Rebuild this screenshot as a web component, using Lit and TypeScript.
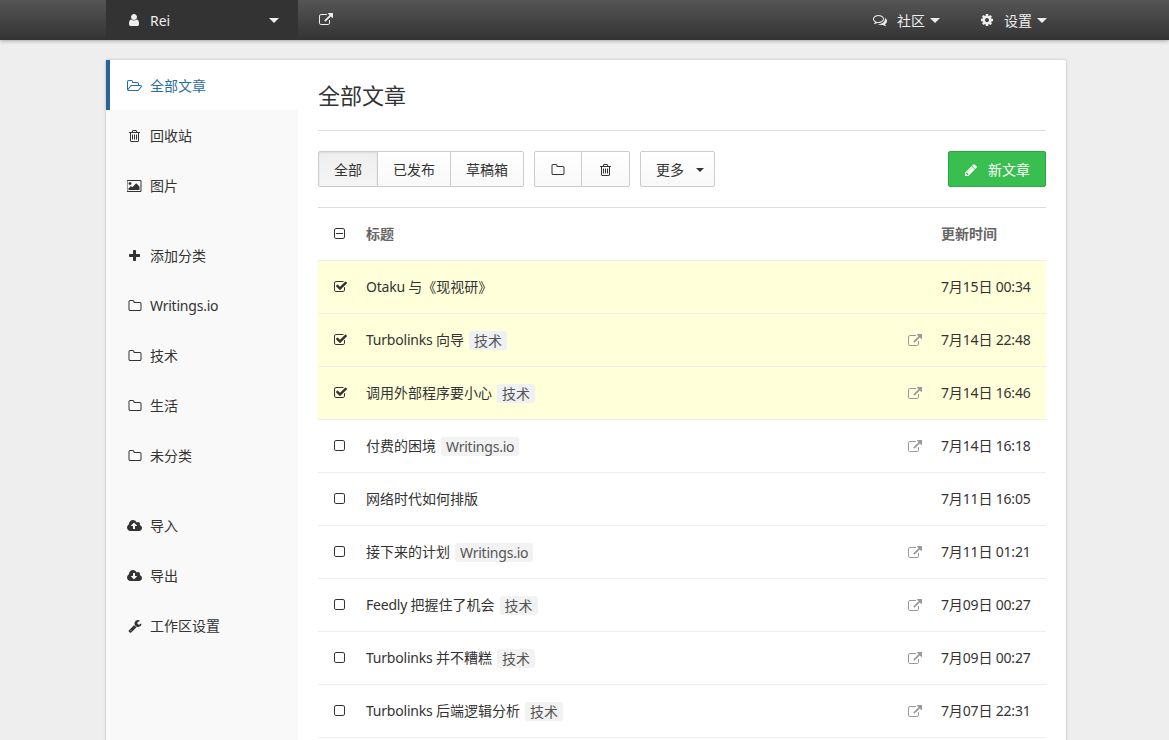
import { LitElement, html, css, svg } from "lit"
import { customElement } from "lit/decorators.js"

// Font Awesome 4 style glyphs, [viewBox width, path]
const ICONS: Record<string, [number, string]> = {
  user: [1792, "M1536 1399q0 109-62.5 187t-150.5 78h-854q-88 0-150.5-78t-62.5-187q0-85 8.5-160.5t31.5-152 58.5-131 94-89 134.5-34.5q131 128 313 128t313-128q76 0 134.5 34.5t94 89 58.5 131 31.5 152 8.5 160.5zm-256-887q0 159-112.5 271.5t-271.5 112.5-271.5-112.5-112.5-271.5 112.5-271.5 271.5-112.5 271.5 112.5 112.5 271.5z"],
  link: [1792, "M1408 928v320q0 119-84.5 203.5t-203.5 84.5h-832q-119 0-203.5-84.5t-84.5-203.5v-832q0-119 84.5-203.5t203.5-84.5h704q14 0 23 9t9 23v64q0 14-9 23t-23 9h-704q-66 0-113 47t-47 113v832q0 66 47 113t113 47h832q66 0 113-47t47-113v-320q0-14 9-23t23-9h64q14 0 23 9t9 23zm384-864v512q0 26-19 45t-45 19-45-19l-176-176-652 652q-10 10-23 10t-23-10l-114-114q-10-10-10-23t10-23l652-652-176-176q-19-19-19-45t19-45 45-19h512q26 0 45 19t19 45z"],
  folder: [1792, "M1600 1312v-704q0-40-28-68t-68-28h-704q-40 0-68-28t-28-68v-64q0-40-28-68t-68-28h-320q-40 0-68 28t-28 68v960q0 40 28 68t68 28h1216q40 0 68-28t28-68zm128-704v704q0 92-66 158t-158 66h-1216q-92 0-158-66t-66-158v-960q0-92 66-158t158-66h320q92 0 158 66t66 158v32h672q92 0 158 66t66 158z"],
  folderOpen: [1920, "M1781 931q0-35-53-35h-1088q-40 0-85.5 21.5t-71.5 52.5l-294 363q-18 24-18 40 0 35 53 35h1088q40 0 86-22t71-53l294-363q18-22 18-39zm-1141-163h768v-160q0-40-28-68t-68-28h-576q-40 0-68-28t-28-68v-64q0-40-28-68t-68-28h-320q-40 0-68 28t-28 68v853l256-315q44-53 116-87.5t140-34.5zm1269 163q0 62-46 120l-295 363q-43 53-116 87.5t-140 34.5h-1088q-92 0-158-66t-66-158v-960q0-92 66-158t158-66h320q92 0 158 66t66 158v32h544q92 0 158 66t66 158v160h192q54 0 99 24.5t67 70.5q15 32 15 68z"],
  trash: [1408, "M512 736v576q0 14-9 23t-23 9h-64q-14 0-23-9t-9-23v-576q0-14 9-23t23-9h64q14 0 23 9t9 23zm256 0v576q0 14-9 23t-23 9h-64q-14 0-23-9t-9-23v-576q0-14 9-23t23-9h64q14 0 23 9t9 23zm256 0v576q0 14-9 23t-23 9h-64q-14 0-23-9t-9-23v-576q0-14 9-23t23-9h64q14 0 23 9t9 23zm128 724v-948h-896v948q0 22 7 40.5t14.5 27 10.5 8.5h832q3 0 10.5-8.5t14.5-27 7-40.5zm-672-1076h448l-48-117q-7-9-17-11h-317q-10 2-17 11zm928 32v64q0 14-9 23t-23 9h-96v948q0 83-47 143.5t-113 60.5h-832q-66 0-113-58.5t-47-141.5v-952h-96q-14 0-23-9t-9-23v-64q0-14 9-23t23-9h309l70-167q15-37 54-63t79-26h320q40 0 79 26t54 63l70 167h309q14 0 23 9t9 23z"],
  picture: [1920, "M576 576q0 80-56 136t-136 56-136-56-56-136 56-136 136-56 136 56 56 136zm1024 384v448h-1408v-192l320-320 160 160 512-512zm96-704h-1600q-13 0-22.5 9.5t-9.5 22.5v1216q0 13 9.5 22.5t22.5 9.5h1600q13 0 22.5-9.5t9.5-22.5v-1216q0-13-9.5-22.5t-22.5-9.5zm160 32v1216q0 66-47 113t-113 47h-1600q-66 0-113-47t-47-113v-1216q0-66 47-113t113-47h1600q66 0 113 47t47 113z"],
  plus: [1408, "M1408 736v192q0 40-28 68t-68 28h-416v416q0 40-28 68t-68 28h-192q-40 0-68-28t-28-68v-416h-416q-40 0-68-28t-28-68v-192q0-40 28-68t68-28h416v-416q0-40 28-68t68-28h192q40 0 68 28t28 68v416h416q40 0 68 28t28 68z"],
  upload: [1920, "M1280 864q0-14-9-23l-352-352q-9-9-23-9t-23 9l-351 351q-10 12-10 24 0 14 9 23t23 9h224v352q0 13 9.5 22.5t22.5 9.5h192q13 0 22.5-9.5t9.5-22.5v-352h224q13 0 22.5-9.5t9.5-22.5zm640 288q0 159-112.5 271.5t-271.5 112.5h-1088q-185 0-316.5-131.5t-131.5-316.5q0-130 70-240t188-165q-2-30-2-43 0-212 150-362t362-150q156 0 285.5 87t188.5 231q71-62 166-62 106 0 181 75t75 181q0 76-41 138 130 31 213.5 135.5t83.5 238.5z"],
  download: [1920, "M1280 928q0-14-9-23t-23-9h-224v-352q0-13-9.5-22.5t-22.5-9.5h-192q-13 0-22.5 9.5t-9.5 22.5v352h-224q-13 0-22.5 9.5t-9.5 22.5q0 14 9 23l352 352q9 9 23 9t23-9l351-351q10-12 10-24zm640 224q0 159-112.5 271.5t-271.5 112.5h-1088q-185 0-316.5-131.5t-131.5-316.5q0-130 70-240t188-165q-2-30-2-43 0-212 150-362t362-150q156 0 285.5 87t188.5 231q71-62 166-62 106 0 181 75t75 181q0 76-41 138 130 31 213.5 135.5t83.5 238.5z"],
  wrench: [1792, "M448 1472q0-26-19-45t-45-19-45 19-19 45 19 45 45 19 45-19 19-45zm644-420l-682 682q-37 37-90 37-52 0-91-37l-106-108q-38-36-38-90 0-53 38-91l681-681q39 98 114.5 173.5t173.5 114.5zm634-435q0 39-23 106-47 134-164.5 217.5t-258.5 83.5q-185 0-316.5-131.5t-131.5-316.5 131.5-316.5 316.5-131.5q58 0 121.5 16.5t107.5 46.5q16 11 16 28t-16 28l-293 169v224l193 107q5-3 79-48.5t135.5-81 70.5-35.5q15 0 23.5 10t8.5 25z"],
  comments: [1792, "M704 384q-153 0-286 52t-211.5 141-78.5 191q0 82 53 158t149 132l97 56-35 84q34-20 62-39l44-31 53 10q78 14 153 14 153 0 286-52t211.5-141 78.5-191-78.5-191-211.5-141-286-52zm0-128q191 0 353.5 68.5t256.5 186.5 94 257-94 257-256.5 186.5-353.5 68.5q-86 0-176-16-124 88-278 128-36 9-86 16h-3q-11 0-20.5-8t-11.5-21q-1-3-1-6.5t.5-6.5 2-6l2.5-5 3.5-5.5 4-5 4.5-5 4-4.5q5-6 23-25t26-29.5 22.5-29 25-38.5 20.5-44q-124-72-195-177t-71-224q0-139 94-257t256.5-186.5 353.5-68.5zm822 1169q10 24 20.5 44t25 38.5 22.5 29 26 29.5 23 25q1 1 4 4.5t4.5 5 4 5 3.5 5.5l2.5 5 2 6 .5 6.5-1 6.5q-3 14-13 22t-22 7q-50-7-86-16-154-40-278-128-90 16-176 16-271 0-472-132 58 4 88 4 161 0 309-45t264-129q125-92 192-212t67-254q0-77-23-152 129 71 204 178t75 230q0 120-71 224.5t-195 176.5z"],
  cog: [1792, "M1152 896q0-106-75-181t-181-75-181 75-75 181 75 181 181 75 181-75 75-181zm512-109v222q0 12-8 23t-20 13l-185 28q-19 54-39 91 35 50 107 138 10 12 10 25t-9 23q-27 37-99 108t-94 71q-12 0-26-9l-138-108q-44 23-91 38-16 136-29 186-7 28-36 28h-222q-14 0-24.5-8.5t-11.5-21.5l-28-184q-49-16-90-37l-141 107q-10 9-25 9-14 0-25-11-126-114-165-168-7-10-7-23 0-12 8-23 15-21 51-66.5t54-70.5q-27-50-41-99l-183-27q-13-2-21-12.5t-8-23.5v-222q0-12 8-23t19-13l186-28q14-46 39-92-40-57-107-138-10-12-10-24 0-10 9-23 26-36 98.5-107.5t94.5-71.5q13 0 26 10l138 107q44-23 91-38 16-136 29-186 7-28 36-28h222q14 0 24.5 8.5t11.5 21.5l28 184q49 16 90 37l142-107q9-9 24-9 13 0 25 10 129 119 165 170 7 8 7 22 0 12-8 23-15 21-51 66.5t-54 70.5q26 50 41 98l183 28q13 2 21 12.5t8 23.5z"],
  pencil: [1536, "M363 1536l91-91-235-235-91 91v107h128v128h107zm523-928q0-22-22-22-10 0-17 7l-542 542q-7 7-7 17 0 22 22 22 10 0 17-7l542-542q7-7 7-17zm-54-192l416 416-832 832h-416v-416zm683 96q0 53-37 90l-166 166-416-416 166-165q36-38 90-38 53 0 91 38l235 234q37 39 37 91z"],
  checked: [1664, "M1408 930v318q0 119-84.5 203.5t-203.5 84.5h-832q-119 0-203.5-84.5t-84.5-203.5v-832q0-119 84.5-203.5t203.5-84.5h832q63 0 117 25 15 7 18 23 3 17-9 29l-49 49q-10 10-23 10-3 0-9-2-23-6-45-6h-832q-66 0-113 47t-47 113v832q0 66 47 113t113 47h832q66 0 113-47t47-113v-254q0-13 9-22l64-64q10-10 23-10 6 0 12 3 20 8 20 29zm231-489l-814 814q-24 24-57 24t-57-24l-430-430q-24-24-24-57t24-57l110-110q24-24 57-24t57 24l263 263 647-647q24-24 57-24t57 24l110 110q24 24 24 57t-24 57z"],
  unchecked: [1408, "M1120 256h-832q-66 0-113 47t-47 113v832q0 66 47 113t113 47h832q66 0 113-47t47-113v-832q0-66-47-113t-113-47zm288 160v832q0 119-84.5 203.5t-203.5 84.5h-832q-119 0-203.5-84.5t-84.5-203.5v-832q0-119 84.5-203.5t203.5-84.5h832q119 0 203.5 84.5t84.5 203.5z"],
  minus: [1408, "M1152 800v64q0 14-9 23t-23 9h-832q-14 0-23-9t-9-23v-64q0-14 9-23t23-9h832q14 0 23 9t9 23zM1120 256h-832q-66 0-113 47t-47 113v832q0 66 47 113t113 47h832q66 0 113-47t47-113v-832q0-66-47-113t-113-47zm288 160v832q0 119-84.5 203.5t-203.5 84.5h-832q-119 0-203.5-84.5t-84.5-203.5v-832q0-119 84.5-203.5t203.5-84.5h832q119 0 203.5 84.5t84.5 203.5z"],
}

function icon(name: string) {
  const [w, d] = ICONS[name]
  return html`<svg class="fa" viewBox="0 0 ${w} 1792" width=${(w / 1792) * 14} height="14" fill="currentColor">${svg`<path d=${d}></path>`}</svg>`
}

// latin runs get tightened so they take the same room as in the reference
function tx(s: string) {
  return s.split(/([\x20-\x7e]+)/).map((part, i) => (i % 2 ? html`<span class="lat">${part}</span>` : part))
}

interface Post {
  title: string
  tag?: string
  link?: boolean
  time: string
  checked?: boolean
}

const POSTS: Post[] = [
  { title: "Otaku 与《现视研》", time: "7月15日 00:34", checked: true },
  { title: "Turbolinks 向导", tag: "技术", link: true, time: "7月14日 22:48", checked: true },
  { title: "调用外部程序要小心", tag: "技术", link: true, time: "7月14日 16:46", checked: true },
  { title: "付费的困境", tag: "Writings.io", link: true, time: "7月14日 16:18" },
  { title: "网络时代如何排版", time: "7月11日 16:05" },
  { title: "接下来的计划", tag: "Writings.io", link: true, time: "7月11日 01:21" },
  { title: "Feedly 把握住了机会", tag: "技术", link: true, time: "7月09日 00:27" },
  { title: "Turbolinks 并不糟糕", tag: "技术", link: true, time: "7月09日 00:27" },
  { title: "Turbolinks 后端逻辑分析", tag: "技术", link: true, time: "7月07日 22:31" },
]

const SIDE_GROUPS: Array<Array<[string, string]>> = [
  [["folderOpen", "全部文章"], ["trash", "回收站"], ["picture", "图片"]],
  [["plus", "添加分类"], ["folder", "Writings.io"], ["folder", "技术"], ["folder", "生活"], ["folder", "未分类"]],
  [["upload", "导入"], ["download", "导出"], ["wrench", "工作区设置"]],
]

@customElement("app-root")
export class AppRoot extends LitElement {
  static styles = css`
    :host {
      display: block;
      height: 100vh;
      overflow: hidden;
      background: #eee;
      color: #333;
      font: 14px/20px "Noto Sans", "Noto Sans CJK SC", sans-serif;
    }
    * {
      box-sizing: border-box;
    }
    .fa {
      display: block;
      flex: none;
    }
    .lat {
      letter-spacing: -0.22px;
    }
    .navbar {
      height: 40px;
      background: linear-gradient(#555, #333);
      box-shadow: 0 1px 4px rgba(0, 0, 0, 0.3);
      color: #eee;
    }
    .nav-inner,
    .page {
      width: 960px;
      margin-left: 106px;
      display: flex;
    }
    .nav-inner {
      height: 40px;
      align-items: center;
    }
    .user {
      width: 192px;
      height: 40px;
      background: #333;
      display: flex;
      align-items: center;
      padding: 0 19px 0 21px;
    }
    .user .name {
      margin: 2px 0 0 9px;
      flex: 1;
    }
    .out {
      margin-left: 21px;
    }
    .spacer {
      flex: 1;
    }
    .menu {
      display: flex;
      align-items: center;
      margin-right: 19px;
    }
    .menu .fa {
      margin-right: 10px;
    }
    .menu .text {
      margin-top: 2px;
    }
    .menu.first {
      margin-right: 40px;
    }
    .caret {
      width: 0;
      height: 0;
      border: 5px solid transparent;
      border-top-color: currentColor;
      border-bottom: 0;
      margin-left: 5px;
    }
    .page {
      margin-top: 20px;
      height: 700px;
      background: #fff;
      box-shadow: 0 0 3px rgba(0, 0, 0, 0.25);
      border-radius: 2px 2px 0 0;
    }
    .side {
      width: 192px;
      background: #f9f9f9;
      flex: none;
    }
    .group + .group {
      margin-top: 20px;
    }
    .item {
      height: 50px;
      display: flex;
      align-items: center;
      padding: 2px 0 0 18px;
    }
    .item .ico {
      width: 21px;
      display: flex;
      justify-content: center;
    }
    .item .label {
      margin-left: 5px;
    }
    .item.active {
      background: #fff;
      border-left: 4px solid #2a6496;
      padding-left: 14px;
      color: #2a6ea6;
    }
    .main {
      flex: 1;
      padding: 0 20px;
    }
    h1 {
      margin: 0;
      height: 71px;
      border-bottom: 1px solid #ddd;
      font-size: 22px;
      font-weight: 400;
      line-height: 70px;
    }
    .toolbar {
      display: flex;
      align-items: center;
      height: 77px;
      border-bottom: 1px solid #ddd;
      padding-bottom: 1px;
    }
    .btn-group {
      display: flex;
      margin-right: 10px;
    }
    .btn {
      height: 36px;
      display: flex;
      align-items: center;
      justify-content: center;
      padding: 2px 15px 0;
      border: 1px solid #ccc;
      background: linear-gradient(#fff, #f8f8f8);
      margin-left: -1px;
    }
    .btn-group .btn:first-child {
      margin-left: 0;
      border-radius: 2px 0 0 2px;
    }
    .btn-group .btn:last-child {
      border-radius: 0 2px 2px 0;
    }
    .btn.on {
      background: linear-gradient(#eee, #f5f5f5);
      box-shadow: inset 0 1px 2px rgba(0, 0, 0, 0.08);
    }
    .btn.icon {
      width: 48px;
      padding: 2px 0 0;
    }
    .btn.icon.wide {
      width: 49px;
    }
    .btn .caret {
      margin-left: 12px;
      border-width: 4px 4px 0;
    }
    .btn.single {
      border-radius: 2px;
      margin-left: 0;
      padding-right: 10px;
    }
    .new {
      width: 98px;
      height: 36px;
      background: #39bf4f;
      border: 1px solid #2ca840;
      border-radius: 2px;
      color: #fff;
      display: flex;
      align-items: center;
      padding: 2px 0 0 16px;
    }
    .new .fa {
      margin-right: 11px;
    }
    .row {
      display: flex;
      align-items: center;
      height: 53px;
      border-bottom: 1px solid #eee;
      padding: 0 15px 0 16px;
    }
    .row.checked {
      background: #ffffd9;
    }
    .row .check {
      width: 32px;
      flex: none;
    }
    .row .title {
      flex: 1;
      display: flex;
      align-items: center;
      min-width: 0;
    }
    .tag {
      margin-left: 5px;
      padding: 0 5px;
      background: #f2f2f2;
      border-radius: 3px;
      color: #555;
      line-height: 19px;
    }
    .row.checked .tag {
      background: #eef0f4;
    }
    .ext {
      color: #999;
      margin: 2px 19px 0 0;
    }
    .time {
      width: 90px;
      white-space: nowrap;
    }
    .head {
      font-weight: 700;
      color: #666;
    }
    .head .check {
      color: #333;
    }
  `

  render() {
    return html`
      <div class="navbar">
        <div class="nav-inner">
          <div class="user">${icon("user")}<span class="name">Rei</span><span class="caret"></span></div>
          <div class="out">${icon("link")}</div>
          <div class="spacer"></div>
          <div class="menu first">${icon("comments")}<span class="text">社区</span><span class="caret"></span></div>
          <div class="menu">${icon("cog")}<span class="text">设置</span><span class="caret"></span></div>
        </div>
      </div>
      <div class="page">
        <div class="side">
          ${SIDE_GROUPS.map(
            (g, gi) => html`<div class="group">
              ${g.map(
                ([ic, label], i) => html`<div class="item ${gi === 0 && i === 0 ? "active" : ""}">
                  <span class="ico">${icon(ic)}</span><span class="label">${tx(label)}</span>
                </div>`,
              )}
            </div>`,
          )}
        </div>
        <div class="main">
          <h1>全部文章</h1>
          <div class="toolbar">
            <div class="btn-group">
              <div class="btn on">全部</div>
              <div class="btn">已发布</div>
              <div class="btn">草稿箱</div>
            </div>
            <div class="btn-group">
              <div class="btn icon">${icon("folder")}</div>
              <div class="btn icon wide">${icon("trash")}</div>
            </div>
            <div class="btn single">更多<span class="caret"></span></div>
            <div class="spacer"></div>
            <div class="new">${icon("pencil")}新文章</div>
          </div>
          <div class="row head">
            <span class="check">${icon("minus")}</span>
            <span class="title">标题</span>
            <span class="time">更新时间</span>
          </div>
          ${POSTS.map(
            (p) => html`<div class="row ${p.checked ? "checked" : ""}">
              <span class="check">${icon(p.checked ? "checked" : "unchecked")}</span>
              <span class="title"><span>${tx(p.title)}</span>${p.tag ? html`<span class="tag">${tx(p.tag)}</span>` : ""}</span>
              ${p.link ? html`<span class="ext">${icon("link")}</span>` : ""}
              <span class="time">${tx(p.time)}</span>
            </div>`,
          )}
        </div>
      </div>
    `
  }
}
